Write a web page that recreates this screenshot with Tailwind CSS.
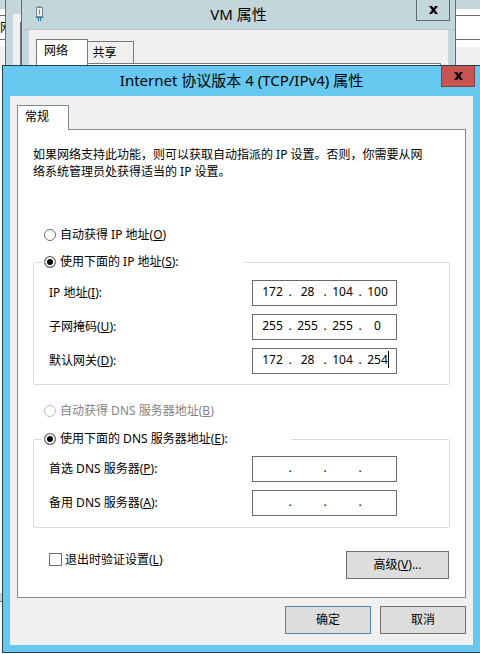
<!DOCTYPE html>
<html lang="zh-CN">
<head>
  <meta charset="UTF-8" />
  <title>Internet 协议版本 4 (TCP/IPv4) 属性</title>
  <meta name="viewport" content="width=device-width, initial-scale=1" />
  <script src="https://cdn.jsdelivr.net/npm/@tailwindcss/browser@4"></script>
</head>
<body class="bg-white text-black text-xs font-['Noto_Sans','Noto_Sans_CJK_SC',sans-serif]">
  <div class="relative min-h-screen overflow-hidden">

    <!-- explorer window at the back -->
    <div class="absolute inset-0 flex flex-col bg-white">
      <div class="h-[9px] bg-[#c3d6dc]"></div>
      <div class="mt-1.5 h-[25px] border-y border-[#6b6b6b] flex items-center overflow-hidden whitespace-nowrap">网络</div>
      <div class="mt-[7px] h-[18px] bg-[#f0f0f0]"></div>
      <div class="mt-auto mb-[52px] h-[9px] bg-[#d0d0d0] border-b border-[#6b6b6b]"></div>
    </div>

    <!-- status window -->
    <div class="absolute left-[5px] top-0 w-5 h-[66px] border-l border-[#5d6c72] bg-[#c3d6dc] pl-[7px] pt-3.5">
      <div class="h-full bg-[#f0f0f0] pl-[7px] pt-2">
        <div class="h-full border-l border-[#6b7378]"></div>
      </div>
    </div>

    <!-- VM window -->
    <section class="absolute left-[21px] right-6 top-0 h-[66px] border-x border-[#5d6c72] bg-[#c3d6dc]">
      <header class="relative h-[30px] flex items-center justify-center border-b border-[#b5c3c8] pb-px">
        <svg class="absolute left-3 top-[6px]" width="11" height="16" viewBox="0 0 11 16" fill="none">
          <rect x="2.500" y="1.500" width="6" height="9" fill="#e9eff1" stroke="#7d8a90" />
          <path d="M4 .5h3M5.500 3.500v5" stroke="#7d8a90" />
          <path d="M1.500 11.500h8M4.500 12v3M6.500 12v3" stroke="#2f7cb5" />
        </svg>
        <h2 class="text-[15px] leading-5">VM 属性</h2>
        <button type="button" aria-label="关闭" class="absolute right-[5px] top-0 w-[34px] h-[21px] border border-t-0 border-[#5d6c72] flex items-center justify-center">
          <svg width="9" height="8" viewBox="0 0 9 8"><path d="M0 0h3l1.500 2.300L6 0h3L6 4l3 4H6L4.500 5.700 3 8H0l3-4z" /></svg>
        </button>
      </header>
      <div class="mx-[7px] h-full bg-[#f0f0f0] px-[7px] pt-[9px] flex items-start">
        <button type="button" class="w-[52px] h-7 bg-white border border-b-0 border-[#7a7a7a] pr-3 pb-1.5">网络</button>
        <div class="flex-1 pt-0.5">
          <button type="button" class="block w-[46px] h-[22px] border border-b-0 border-l-0 border-[#7a7a7a] pr-3">共享</button>
          <div class="h-3 border-t border-r border-[#7a7a7a] bg-white"></div>
        </div>
      </div>
    </section>

    <!-- IPv4 dialog -->
    <section class="absolute left-0.5 right-0 top-[65px] border border-r-0 border-[#20414f] bg-[#66c8ee] px-[7px] pb-[7px]">
      <header class="h-[30px] flex items-center justify-center pb-0.5">
        <h1 class="text-[15px] leading-5">Internet 协议版本 4 (TCP/IPv4) 属性</h1>
        <button type="button" aria-label="关闭" class="absolute right-[5px] top-0 w-[34px] h-[21px] bg-[#c75450] border border-t-0 border-[#7d4044] flex items-center justify-center">
          <svg width="9" height="8" viewBox="0 0 9 8"><path d="M0 0h3l1.500 2.300L6 0h3L6 4l3 4H6L4.500 5.700 3 8H0l3-4z" /></svg>
        </button>
      </header>

      <form class="bg-[#f0f0f0] px-[7px] pt-[9px] pb-[11px]">
        <button type="button" class="relative z-10 block w-[52px] h-[25px] -mb-px bg-white border border-b-0 border-[#828790] pr-3 pb-0.5">常规</button>
        <div class="bg-white border border-[#828790] px-[15px] pt-4 pb-[18px]">
          <p class="leading-[17px]">如果网络支持此功能，则可以获取自动指派的 IP 设置。否则，你需要从网<br>络系统管理员处获得适当的 IP 设置。</p>

          <label class="mt-[45px] ml-[11px] h-5 flex items-center gap-1">
            <input type="radio" name="ip" class="appearance-none size-3 rounded-full border border-[#707070] bg-white checked:bg-black checked:shadow-[inset_0_0_0_2px_#fff]">
            <span>自动获得 IP 地址(<u>O</u>)</span>
          </label>

          <fieldset class="mt-[7px] border border-[#dcdcdc] rounded-xs px-[15px] pb-2.5">
            <legend class="-ml-[7px] w-[202px] pl-0.5">
              <label class="h-5 flex items-center gap-1">
                <input type="radio" name="ip" checked class="appearance-none size-3 rounded-full border border-[#707070] bg-white checked:bg-black checked:shadow-[inset_0_0_0_2px_#fff]">
                <span>使用下面的 IP 地址(<u>S</u>):</span>
              </label>
            </legend>
            <div class="pt-2 flex flex-col gap-2">
              <div class="flex items-center"><label for="ip-0" class="w-[203px]">IP 地址(<u>I</u>):</label><div data-ip="ip" data-value="172.28.104.100"></div></div>
              <div class="flex items-center"><label for="mask-0" class="w-[203px]">子网掩码(<u>U</u>):</label><div data-ip="mask" data-value="255.255.255.0"></div></div>
              <div class="flex items-center"><label for="gateway-0" class="w-[203px]">默认网关(<u>D</u>):</label><div data-ip="gateway" data-value="172.28.104.254" data-caret="1"></div></div>
            </div>
          </fieldset>

          <label class="mt-4 ml-[11px] h-5 flex items-center gap-1 text-[#838383]">
            <input type="radio" name="dns" disabled class="appearance-none size-3 rounded-full border border-[#bcbcbc] bg-white">
            <span>自动获得 DNS 服务器地址(<u>B</u>)</span>
          </label>

          <fieldset class="mt-2 border border-[#dcdcdc] rounded-xs px-[15px] pb-[11px]">
            <legend class="-ml-[7px] w-[249px] pl-0.5">
              <label class="h-5 flex items-center gap-1">
                <input type="radio" name="dns" checked class="appearance-none size-3 rounded-full border border-[#707070] bg-white checked:bg-black checked:shadow-[inset_0_0_0_2px_#fff]">
                <span>使用下面的 DNS 服务器地址(<u>E</u>):</span>
              </label>
            </legend>
            <div class="pt-[7px] flex flex-col gap-2">
              <div class="flex items-center"><label for="dns1-0" class="w-[203px]">首选 DNS 服务器(<u>P</u>):</label><div data-ip="dns1" data-value="..."></div></div>
              <div class="flex items-center"><label for="dns2-0" class="w-[203px]">备用 DNS 服务器(<u>A</u>):</label><div data-ip="dns2" data-value="..."></div></div>
            </div>
          </fieldset>

          <div class="mt-[23px] pl-4 pr-px flex items-start justify-between">
            <label class="h-[17px] flex items-center gap-[3px]">
              <input type="checkbox" class="appearance-none size-[13px] border border-[#707070] bg-white">
              <span>退出时验证设置(<u>L</u>)</span>
            </label>
            <button type="button" class="w-[103px] h-7 border border-[#707070] bg-[#dddddd]">高级(<u>V</u>)...</button>
          </div>
        </div>

        <div class="mt-2 flex justify-end gap-[9px]">
          <button type="button" class="w-[86px] h-7 border border-[#5682a8] bg-[#dddddd]">确定</button>
          <button type="button" class="w-[86px] h-7 border border-[#707070] bg-[#dddddd]">取消</button>
        </div>
      </form>
    </section>
  </div>

  <script>
    // build the four-octet address boxes
    document.querySelectorAll('[data-ip]').forEach(el => {
      const id = el.dataset.ip;
      el.className = 'relative w-[145px] h-[26px] border border-[#6a6a6a] bg-white pl-1 pb-0.5 flex items-center';
      el.innerHTML = el.dataset.value.split('.')
        .map((v, i) => `<input id="${id}-${i}" type="text" maxlength="3" value="${v}" aria-label="${id} ${i + 1}" class="w-[31px] text-center outline-none">`)
        .join('<span class="w-1 text-center">.</span>');
      if (el.dataset.caret) {
        el.innerHTML += '<span class="absolute left-[135px] top-0.5 w-px h-[17px] bg-black"></span>';
      }
    });
  </script>
</body>
</html>
